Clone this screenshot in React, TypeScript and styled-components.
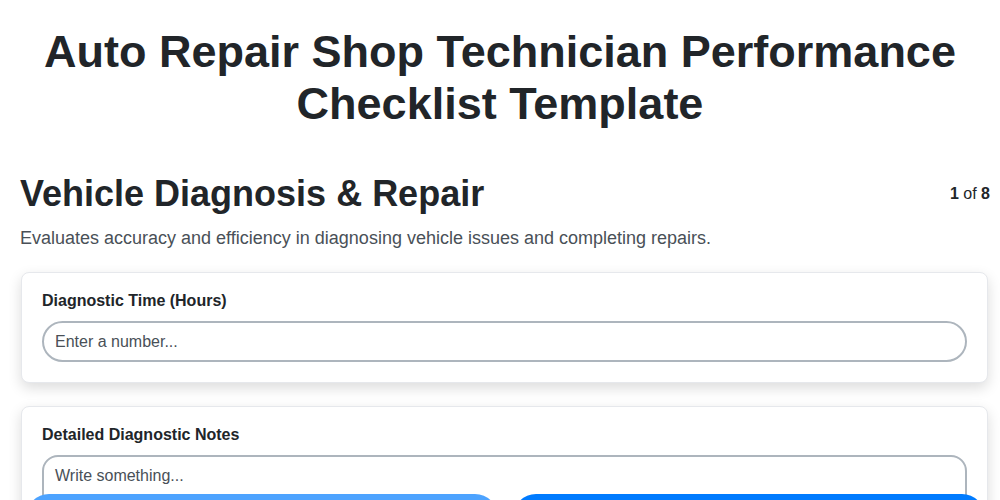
import styled, { createGlobalStyle } from "styled-components";

const GlobalStyle = createGlobalStyle`
  html, body {
    margin: 0;
    padding: 0;
    background: #ffffff;
    font-family: "Liberation Sans", Arial, sans-serif;
    color: #212529;
  }
  * { box-sizing: border-box; }
`;

const Page = styled.div`
  padding: 0 10px 120px 20px;
`;

const Title = styled.h1`
  margin: 0;
  padding: 26px 10px 0 0;
  text-align: center;
  font-size: 45px;
  line-height: 52px;
  font-weight: 700;
  color: #212529;
`;

const SectionHead = styled.div`
  display: flex;
  justify-content: space-between;
  align-items: flex-start;
  margin-top: 42px;
`;

const SectionTitle = styled.h2`
  margin: 0;
  font-size: 36px;
  line-height: 44px;
  font-weight: 700;
  color: #212529;
`;

const Counter = styled.div`
  font-size: 16px;
  line-height: 20px;
  padding-top: 12px;
  color: #212529;
  b { font-weight: 700; }
`;

const Description = styled.p`
  margin: 10px 0 22px;
  font-size: 18px;
  line-height: 24px;
  color: #495057;
`;

const Card = styled.div`
  background: #fff;
  border: 1px solid #e6e8ec;
  border-radius: 8px;
  box-shadow: 0 5px 14px rgba(0, 0, 0, 0.14);
  padding: 19px 20px 20px;
  margin: 0 2px 23px 1px;
`;

const Label = styled.label`
  display: block;
  font-size: 16px;
  line-height: 18px;
  font-weight: 700;
  color: #212529;
  margin-bottom: 11px;
`;

const TextInput = styled.input`
  display: block;
  width: 100%;
  height: 41px;
  border: 2px solid #adb5bd;
  border-radius: 21px;
  padding: 0 11px;
  font-family: "Liberation Sans", Arial, sans-serif;
  font-size: 16px;
  color: #212529;
  background: #fff;
  outline: none;
  &::placeholder { color: #495057; }
`;

const TextArea = styled.textarea`
  display: block;
  width: 100%;
  height: 110px;
  border: 2px solid #adb5bd;
  border-radius: 16px;
  padding: 8px 11px;
  font-family: "Liberation Sans", Arial, sans-serif;
  font-size: 16px;
  line-height: 22px;
  color: #212529;
  resize: none;
  outline: none;
  &::placeholder { color: #495057; }
`;

const Footer = styled.div`
  position: fixed;
  left: 0;
  right: 0;
  bottom: -40px;
  display: grid;
  grid-template-columns: 1fr 1fr;
  gap: 15px;
  padding: 0 15px 0 26px;
`;

const NavButton = styled.button<{ $primary?: boolean }>`
  height: 46px;
  border: none;
  border-radius: 23px;
  background: ${(p) => (p.$primary ? "#007bff" : "#4da3ff")};
  color: #fff;
  font-family: "Liberation Sans", Arial, sans-serif;
  font-size: 16px;
  font-weight: 700;
`;

export default function App() {
  return (
    <>
      <GlobalStyle />
      <Page>
        <Title>Auto Repair Shop Technician Performance Checklist Template</Title>
        <SectionHead>
          <SectionTitle>Vehicle Diagnosis &amp; Repair</SectionTitle>
          <Counter>
            <b>1</b> of <b>8</b>
          </Counter>
        </SectionHead>
        <Description>
          Evaluates accuracy and efficiency in diagnosing vehicle issues and completing repairs.
        </Description>
        <Card>
          <Label>Diagnostic Time (Hours)</Label>
          <TextInput type="text" placeholder="Enter a number..." />
        </Card>
        <Card>
          <Label>Detailed Diagnostic Notes</Label>
          <TextArea placeholder="Write something..." />
        </Card>
      </Page>
      <Footer>
        <NavButton>Previous</NavButton>
        <NavButton $primary>Next</NavButton>
      </Footer>
    </>
  );
}
